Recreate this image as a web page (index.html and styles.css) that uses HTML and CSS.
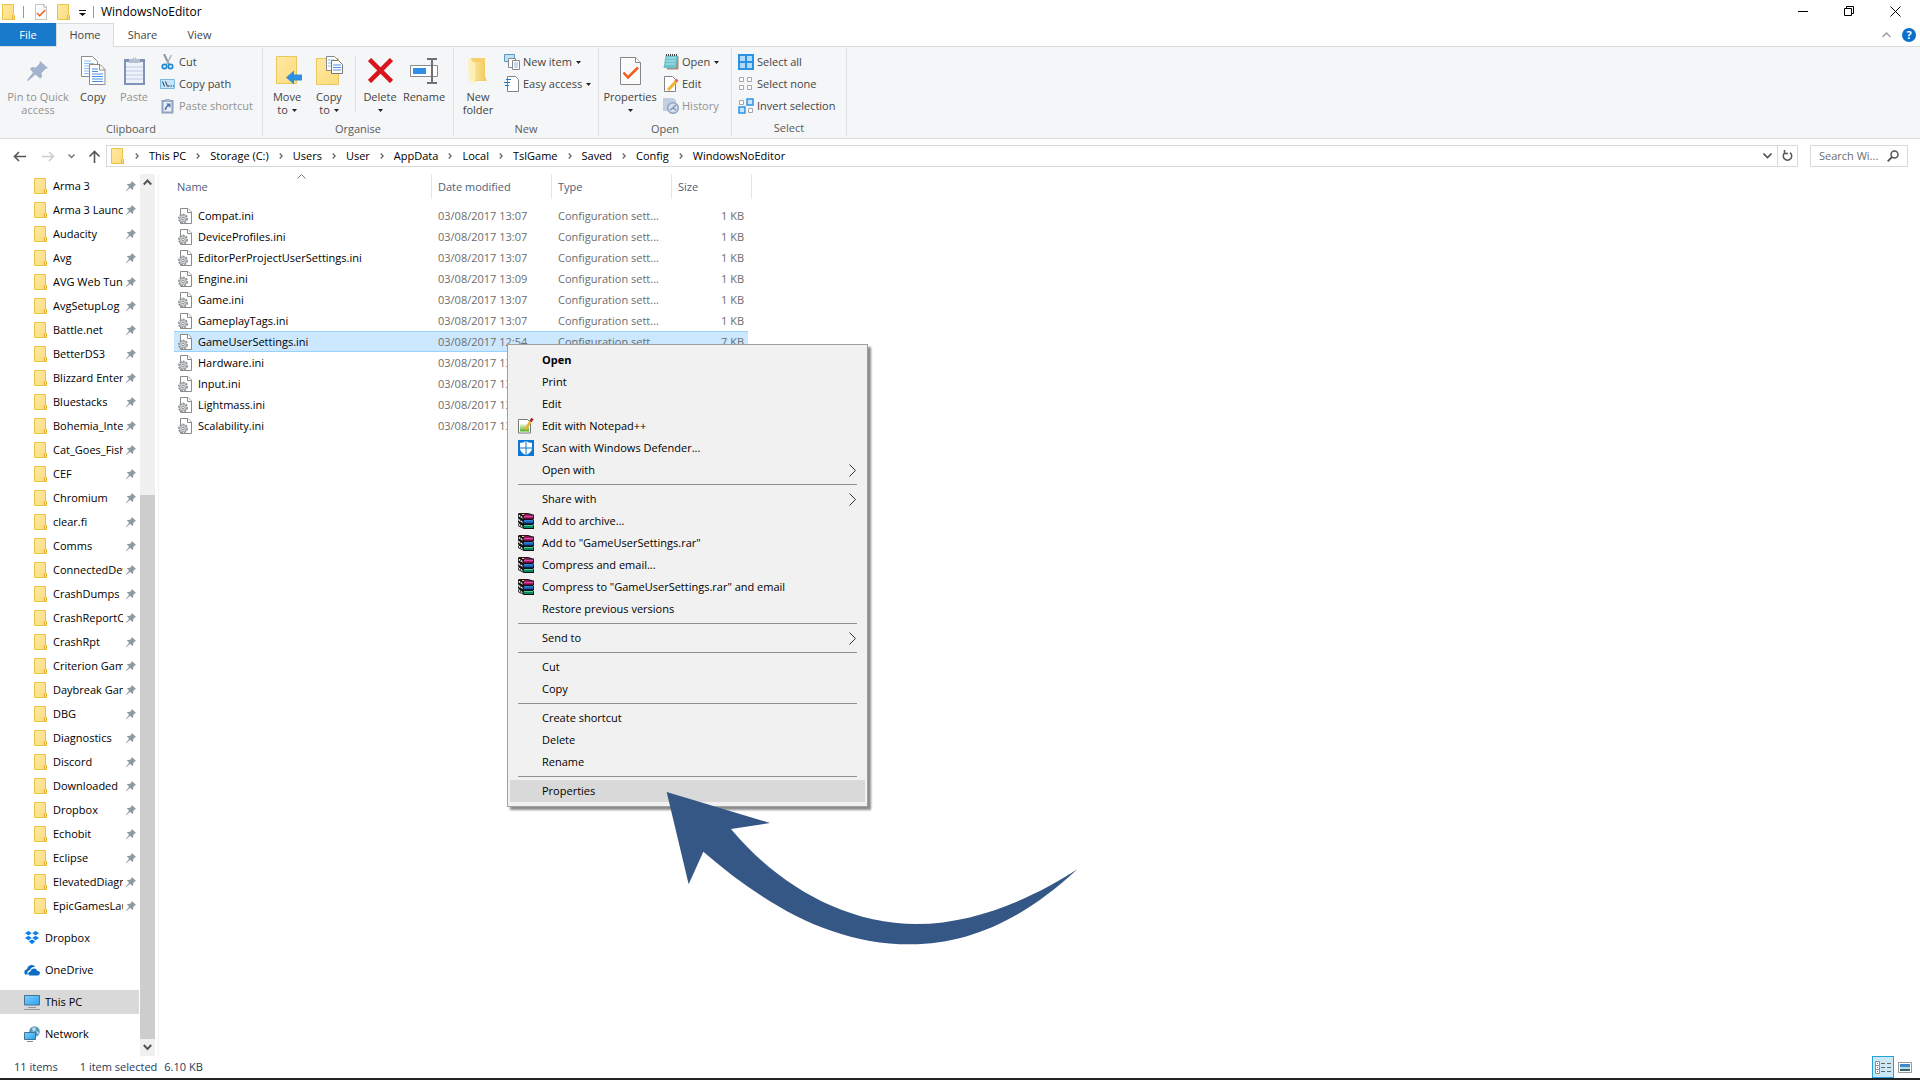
FILE: index.html
```html
<!DOCTYPE html>
<html lang="en-GB">
<head>
<meta charset="utf-8">
<title>WindowsNoEditor</title>
<link rel="stylesheet" href="styles.css">
</head>
<body>
<svg class="defs" aria-hidden="true">
  <defs>
    <linearGradient id="gFolder" x1="0" y1="0" x2="1" y2="1"><stop offset="0" stop-color="#ffe9a2"/><stop offset="1" stop-color="#fbdc7c"/></linearGradient>
    <linearGradient id="gFold" x1="0" y1="0" x2="1" y2="0"><stop offset="0" stop-color="#fbe394"/><stop offset="1" stop-color="#f3cb5c"/></linearGradient>
    <linearGradient id="gScreen" x1="0" y1="0" x2="1" y2="1"><stop offset="0" stop-color="#7fd0fb"/><stop offset="1" stop-color="#2ba2ee"/></linearGradient>
    <linearGradient id="gNpp" x1="0" y1="0" x2="0" y2="1"><stop offset="0" stop-color="#f3f7e4"/><stop offset="1" stop-color="#4fae1c"/></linearGradient>
  </defs>
  <symbol id="folder" viewBox="0 0 14 16"><path d="M.5.5h11v10.200l1 .8v4H.5z" fill="url(#gFolder)" stroke="#e9c447"/><path d="M10.500 15.500v-4l1-1 1 1v4z" fill="#fbe08a" stroke="#e3b93a"/></symbol>
  <symbol id="pin" viewBox="0 0 10 10"><path d="M6 0l4 4-1.300.5-1.600 1.700.1 2.100-.9.700L4.100 6.700.400 9.900 0 9.500l3.200-3.700L1 3.600l.8-.8 2.100.1L5.500 1.300z" fill="#8d989f"/></symbol>
  <symbol id="inifile" viewBox="0 0 14 16"><path d="M2.500.5h7.500l3.500 3.500v11.500h-11z" fill="#fff" stroke="#8a8a8a"/><path d="M9.500.5v4h4" fill="#fff" stroke="#8a8a8a"/><circle cx="5" cy="10.500" r="4" fill="#e4e6e7" stroke="#8f9497" stroke-width="2" stroke-dasharray="2 1"/><circle cx="5" cy="10.500" r="3.100" fill="#dfe2e3" stroke="#a6abae"/><circle cx="5" cy="10.500" r="1.300" fill="#fff" stroke="#858a8d"/></symbol>
  <symbol id="sheets" viewBox="0 0 25 29"><path d="M.5.5h11l5 5v15H.5z" fill="#fff" stroke="#8b8b8b"/><path d="M3 5h7M3 7.500h10M3 10h10M3 12.500h10M3 15h10M3 17.500h10" stroke="#8cbcf0"/><path d="M8.500 8.500h10.500l5 5v15H8.500z" fill="#fff" stroke="#8b8b8b"/><path d="M18.500 8.500v5.500h5.500" fill="none" stroke="#8b8b8b"/><path d="M11 13h6M11 15.500h6M11 18h11M11 20.500h11M11 23h11M11 25.500h11" stroke="#4a90e2"/></symbol>
  <symbol id="props" viewBox="0 0 21 28"><path d="M.5.5h15l5 5v22H.5z" fill="#fbfbfc" stroke="#868686"/><path d="M15.500.5v5h5" fill="#fff" stroke="#868686"/><path d="M3.500 15.500l4.500 5 10-10" fill="none" stroke="#f4591b" stroke-width="2.500"/></symbol>
  <symbol id="chev" viewBox="0 0 4 6"><path d="M.7.5L3.200 3 .7 5.500" fill="none" stroke="#666" stroke-width="1.300"/></symbol>
  <symbol id="down" viewBox="0 0 5 3"><path d="M0 0h5L2.500 3z" fill="#222"/></symbol>
  <symbol id="sub" viewBox="0 0 7 13"><path d="M.5.5l6 6-6 6" fill="none" stroke="#333"/></symbol>
  <symbol id="rar" viewBox="0 0 16 16"><path d="M1 0h9l5 1.500h1V6l-1 .5 1 .5v4l-1 .5 1 .5v4H6L0 13v-2l1-.5L0 9V7l1-.5L0 5V1z" fill="#111"/><path d="M2 .8h7.500L14 2.200H6z" fill="#8e1254"/><path d="M6 2.700h9.200v2.800H6z" fill="#b3146c"/><path d="M6 2.700h9.200v1H6z" fill="#e46bb0"/><path d="M6 7.300h9.200v3H6z" fill="#1258b4"/><path d="M6 7.300h9.200v1H6z" fill="#49a0ec"/><path d="M6 12h9.200v3H6z" fill="#0d8a5a"/><path d="M6 12h9.200v1H6z" fill="#4fd0a0"/><path d="M.8 2.500L5 5M.8 7L5 9.500M.8 11.500L5 14" stroke="#f4f4f4" stroke-width="1.600" stroke-dasharray="1.500 .7"/><path d="M4 1h2v1H4z" fill="#e6d24a"/></symbol>
</svg>

<header class="titlebar">
  <svg class="folder" aria-hidden="true"><use href="#folder"/></svg>
  <span class="tsep"></span>
  <svg class="tprops" aria-hidden="true"><use href="#props"/></svg>
  <svg class="folder" aria-hidden="true"><use href="#folder"/></svg>
  <svg class="tcaret" viewBox="0 0 7 6" aria-hidden="true"><path d="M0 0h7v1H0zM0 3h7L3.500 6z" fill="#111"/></svg>
  <span class="tsep"></span>
  <h1 class="title">WindowsNoEditor</h1>
  <button class="win" aria-label="Minimise"><svg width="11" height="11"><path d="M0 5.500h10" stroke="#000"/></svg></button>
  <button class="win" aria-label="Restore"><svg width="11" height="11"><path d="M.5 2.500h7v7h-7zM2.500 2.500v-2h7v7h-2" fill="none" stroke="#000"/></svg></button>
  <button class="win" aria-label="Close"><svg width="11" height="11"><path d="M.5.5l10 10M10.500.5l-10 10" stroke="#000"/></svg></button>
</header>

<nav class="tabs">
  <button class="tab file">File</button>
  <button class="tab home">Home</button>
  <button class="tab">Share</button>
  <button class="tab">View</button>
  <span class="tools">
    <svg width="9" height="6" aria-hidden="true"><path d="M.5 5l4-4 4 4" fill="none" stroke="#a0a0a0" stroke-width="1.500"/></svg>
    <button class="help" aria-label="Help">?</button>
  </span>
</nav>

<section class="ribbon">
  <div class="group clipboard">
    <div class="tools-row">
      <button class="big w76 off"><svg width="22" height="22" viewBox="0 0 22 22"><path d="M13 1l8 7-2.500 1-4 4 .5 4-2 1.500-4.500-4L1.500 20.500 0 21l.5-1.500L6 12.500 3 9l2-2 4 .5 3.500-4z" fill="#a3b3cd"/></svg><span>Pin to Quick<br>access</span></button>
      <button class="big w36"><svg width="25" height="29"><use href="#sheets"/></svg><span>Copy</span></button>
      <button class="big w46 off"><svg width="21" height="29" viewBox="0 0 21 29"><path d="M0 3h21v26H0z" fill="#8092b5"/><path d="M2 6h17v21H2z" fill="#eef2fa"/><path d="M2 11h17M2 15h17M2 19h17M2 23h17" stroke="#bfcce4"/><path d="M5 3h3.500a2 2 0 014 0H16v4H5z" fill="#b5bfd0"/><path d="M10 1h1v2h-1z" fill="#fff"/></svg><span>Paste</span></button>
      <div class="small-col">
        <button class="small"><svg width="16" height="16" viewBox="0 0 16 16"><path d="M4 0l5 10.500" stroke="#8799a8" stroke-width="2"/><path d="M11.500 1L6.500 10.500" stroke="#a9b6c0" stroke-width="1.500"/><circle cx="4.500" cy="12.500" r="2.200" fill="none" stroke="#1e88d2" stroke-width="1.700"/><circle cx="10.500" cy="12.500" r="2.200" fill="none" stroke="#1e88d2" stroke-width="1.700"/></svg>Cut</button>
        <button class="small"><svg width="16" height="16" viewBox="0 0 16 16"><path d="M.5 3.500h14v9H.5z" fill="#c5e6fb" stroke="#7db9df"/><path d="M2.500 5.500l2 5M5.500 5.500l2 5M8 10h1.500M10.500 10H12M13 10h1" stroke="#234"/></svg>Copy path</button>
        <button class="small off"><svg width="16" height="16" viewBox="0 0 16 16"><path d="M1.500 2h12v13.500h-12z" fill="#8fa0c0"/><path d="M3.500 4h8v9.500h-8z" fill="#eaf0fa"/><path d="M5 1h5v3H5z" fill="#a6b2c8"/><path d="M5.500 12c0-3 1-4 4-5" fill="none" stroke="#5575ad" stroke-width="1.700"/><path d="M6 5.500h4.500V10z" fill="#5575ad"/></svg>Paste shortcut</button>
      </div>
    </div>
    <h2 class="glabel">Clipboard</h2>
  </div>

  <div class="group organise">
    <div class="tools-row">
      <button class="big w42"><svg width="29" height="29" viewBox="0 0 29 29"><path d="M3.500.5h20v27h-20z" fill="url(#gFolder)" stroke="#eac75d"/><path d="M13 21.500l8-7v4h8v6h-8v4z" fill="#2f8fe0"/></svg><span>Move<br>to<svg class="dn"><use href="#down"/></svg></span></button>
      <button class="big w42"><svg width="27" height="31" viewBox="0 0 27 31"><path d="M.5 3.500h22v26H.5z" fill="url(#gFolder)" stroke="#eac75d"/><path d="M10.500 1.500h8l4 4v10h-12z" fill="#fff" stroke="#888"/><path d="M12 5h6M12 8h5M12 11h5" stroke="#8cbcf0"/><path d="M15.500 5.500h7l4 4v9h-11z" fill="#fff" stroke="#777"/><path d="M17 10h8M17 12.500h8M17 15h8" stroke="#4a90e2"/></svg><span>Copy<br>to<svg class="dn"><use href="#down"/></svg></span></button>
      <span class="vsep"></span>
      <button class="big w46"><svg width="25" height="25" viewBox="0 0 25 25"><path d="M1.500 1.500l22 22M23.500 1.500l-22 22" stroke="#d8141c" stroke-width="4.500"/></svg><span>Delete<br><svg class="dn alone"><use href="#down"/></svg></span></button>
      <button class="big w42"><svg width="28" height="26" viewBox="0 0 28 26"><path d="M.5 7.500h27v11H.5z" fill="#fff" stroke="#8a8a8a"/><path d="M3 10h13v6H3z" fill="#2d8fe5"/><path d="M17 1h4q1 0 1 2v20q0 2-1 2h-4M27 1h-4q-1 0-1 2M27 25h-4q-1 0-1-2" fill="none" stroke="#6f6f6f" stroke-width="2"/></svg><span>Rename</span></button>
    </div>
    <h2 class="glabel">Organise</h2>
  </div>

  <div class="group new">
    <div class="tools-row">
      <button class="big w42"><svg width="20" height="28" viewBox="0 0 20 28"><path d="M3 1h14v18l2 5H6z" fill="#f6d16b"/><path d="M0 1l7 5v21l-6-4z" fill="#fff0b8"/><path d="M7 5h10v18H7z" fill="url(#gFold)"/></svg><span>New<br>folder</span></button>
      <div class="small-col">
        <button class="small"><svg width="16" height="16" viewBox="0 0 16 16"><path d="M.5.5h10v7H.5z" fill="#bfe2f8" stroke="#5b98bd"/><path d="M4.500 4.500h7v9h-7z" fill="#fff" stroke="#888"/><path d="M8.500 6.500h7v9h-7z" fill="#fff" stroke="#888"/><path d="M10 9h4M10 11h4M10 13h4" stroke="#8cb8e4"/></svg>New item<svg class="dn"><use href="#down"/></svg></button>
        <button class="small"><svg width="16" height="16" viewBox="0 0 16 16"><path d="M3.500.5h8l3 3v12h-11z" fill="#fff" stroke="#848484"/><path d="M2 3.500h5M0 6.500h6M1 9.500h4" stroke="#2372b8"/></svg>Easy access<svg class="dn"><use href="#down"/></svg></button>
      </div>
    </div>
    <h2 class="glabel">New</h2>
  </div>

  <div class="group open">
    <div class="tools-row">
      <button class="big w56"><svg width="21" height="28"><use href="#props"/></svg><span>Properties<br><svg class="dn alone"><use href="#down"/></svg></span></button>
      <div class="small-col">
        <button class="small"><svg width="16" height="16" viewBox="0 0 16 16"><path d="M3 2h12.500v13.500H4z" fill="#a3907a"/><path d="M2.500 1.500h12l-1.500 12.500H.5z" fill="#6cc3d0"/><path d="M3.500 4h9.500M3 7h9.500M2.500 10h9.500" stroke="#b8e8ee"/><path d="M3 1h11" stroke="#444" stroke-dasharray="1 1" stroke-width="2"/></svg>Open<svg class="dn"><use href="#down"/></svg></button>
        <button class="small"><svg width="16" height="16" viewBox="0 0 16 16"><path d="M1.500.5h8l3 3v12h-11z" fill="#fff" stroke="#848484"/><path d="M5 14l8.500-9" stroke="#f2b42c" stroke-width="3"/><path d="M12.500 5.500l2-2" stroke="#e06a6a" stroke-width="3"/></svg>Edit</button>
        <button class="small off"><svg width="16" height="16" viewBox="0 0 16 16"><path d="M0 0h10l3 2v11H0z" fill="#c3cee3"/><circle cx="10" cy="10" r="5.300" fill="#d7deec" stroke="#93a4c4" stroke-width="1.500"/><path d="M7 12l3-2 3-3M10 10l3 2" stroke="#7f93b8" stroke-width="1.500"/></svg>History</button>
      </div>
    </div>
    <h2 class="glabel">Open</h2>
  </div>

  <div class="group select">
    <div class="tools-row">
      <div class="small-col">
        <button class="small"><svg width="16" height="16" viewBox="0 0 16 16"><path d="M1 1h14v14H1zM8 1v14M1 8h14" fill="#b4dcfa" stroke="#2b93e6" stroke-width="2"/></svg>Select all</button>
        <button class="small"><svg width="16" height="16" viewBox="0 0 16 16"><path d="M1.500 1.500h4v4h-4zM9.500 1.500h4v4h-4zM1.500 9.500h4v4h-4zM9.500 9.500h4v4h-4z" fill="#fff" stroke="#a6a6a6"/></svg>Select none</button>
        <button class="small"><svg width="16" height="16" viewBox="0 0 16 16"><path d="M1.500 2.500h4v4h-4zM10.500 10.500h4v4h-4z" fill="#fff" stroke="#a6a6a6"/><path d="M9 1h6v6H9zM1 9h6v6H1z" fill="#c5e5fc" stroke="#2b93e6" stroke-width="1.500"/></svg>Invert selection</button>
      </div>
    </div>
    <h2 class="glabel">Select</h2>
  </div>
</section>

<div class="navbar">
  <div class="arrows">
    <button class="bare back" aria-label="Back"><svg width="13" height="11"><path d="M13 5.500H2M6 1L1.500 5.500 6 10" fill="none" stroke="#555" stroke-width="1.600"/></svg></button>
    <button class="bare" aria-label="Forward"><svg width="13" height="11"><path d="M0 5.500h11M7 1l4.500 4.500L7 10" fill="none" stroke="#ccc" stroke-width="1.600"/></svg></button>
    <button class="bare" aria-label="Recent"><svg width="7" height="5"><path d="M.5.5l3 3 3-3" fill="none" stroke="#777" stroke-width="1.500"/></svg></button>
    <button class="bare" aria-label="Up"><svg width="13" height="13"><path d="M6.500 13V2M1.500 6.500l5-5 5 5" fill="none" stroke="#555" stroke-width="1.600"/></svg></button>
  </div>
  <div class="address">
    <svg class="folder" aria-hidden="true"><use href="#folder"/></svg>
    <svg class="chev"><use href="#chev"/></svg><a href="#">This PC</a>
    <svg class="chev"><use href="#chev"/></svg><a href="#">Storage (C:)</a>
    <svg class="chev"><use href="#chev"/></svg><a href="#">Users</a>
    <svg class="chev"><use href="#chev"/></svg><a href="#">User</a>
    <svg class="chev"><use href="#chev"/></svg><a href="#">AppData</a>
    <svg class="chev"><use href="#chev"/></svg><a href="#">Local</a>
    <svg class="chev"><use href="#chev"/></svg><a href="#">TslGame</a>
    <svg class="chev"><use href="#chev"/></svg><a href="#">Saved</a>
    <svg class="chev"><use href="#chev"/></svg><a href="#">Config</a>
    <svg class="chev"><use href="#chev"/></svg><a href="#">WindowsNoEditor</a>
    <button class="bare drop" aria-label="Previous locations"><svg width="9" height="6"><path d="M.5.5l4 4 4-4" fill="none" stroke="#555" stroke-width="1.600"/></svg></button>
    <button class="bare refresh" aria-label="Refresh"><svg width="11" height="12"><path d="M8 2.600a4.200 4.200 0 11-5 0M2.500 0v3.500H6" fill="none" stroke="#555" stroke-width="1.500"/></svg></button>
  </div>
  <label class="search"><input type="text" placeholder="Search Wi..." aria-label="Search WindowsNoEditor"><svg width="12" height="12"><circle cx="7.500" cy="4.500" r="3.500" fill="none" stroke="#555" stroke-width="1.500"/><path d="M5 7L.7 11.300" stroke="#555" stroke-width="1.800"/></svg></label>
</div>

<main class="body">
  <aside class="side">
    <ul class="quick">
      <li><svg class="folder"><use href="#folder"/></svg><a href="#">Arma 3</a><svg class="pin"><use href="#pin"/></svg></li>
      <li><svg class="folder"><use href="#folder"/></svg><a href="#">Arma 3 Launcher</a><svg class="pin"><use href="#pin"/></svg></li>
      <li><svg class="folder"><use href="#folder"/></svg><a href="#">Audacity</a><svg class="pin"><use href="#pin"/></svg></li>
      <li><svg class="folder"><use href="#folder"/></svg><a href="#">Avg</a><svg class="pin"><use href="#pin"/></svg></li>
      <li><svg class="folder"><use href="#folder"/></svg><a href="#">AVG Web TuneUp</a><svg class="pin"><use href="#pin"/></svg></li>
      <li><svg class="folder"><use href="#folder"/></svg><a href="#">AvgSetupLog</a><svg class="pin"><use href="#pin"/></svg></li>
      <li><svg class="folder"><use href="#folder"/></svg><a href="#">Battle.net</a><svg class="pin"><use href="#pin"/></svg></li>
      <li><svg class="folder"><use href="#folder"/></svg><a href="#">BetterDS3</a><svg class="pin"><use href="#pin"/></svg></li>
      <li><svg class="folder"><use href="#folder"/></svg><a href="#">Blizzard Entertainment</a><svg class="pin"><use href="#pin"/></svg></li>
      <li><svg class="folder"><use href="#folder"/></svg><a href="#">Bluestacks</a><svg class="pin"><use href="#pin"/></svg></li>
      <li><svg class="folder"><use href="#folder"/></svg><a href="#">Bohemia_Interactive</a><svg class="pin"><use href="#pin"/></svg></li>
      <li><svg class="folder"><use href="#folder"/></svg><a href="#">Cat_Goes_Fishing</a><svg class="pin"><use href="#pin"/></svg></li>
      <li><svg class="folder"><use href="#folder"/></svg><a href="#">CEF</a><svg class="pin"><use href="#pin"/></svg></li>
      <li><svg class="folder"><use href="#folder"/></svg><a href="#">Chromium</a><svg class="pin"><use href="#pin"/></svg></li>
      <li><svg class="folder"><use href="#folder"/></svg><a href="#">clear.fi</a><svg class="pin"><use href="#pin"/></svg></li>
      <li><svg class="folder"><use href="#folder"/></svg><a href="#">Comms</a><svg class="pin"><use href="#pin"/></svg></li>
      <li><svg class="folder"><use href="#folder"/></svg><a href="#">ConnectedDevices</a><svg class="pin"><use href="#pin"/></svg></li>
      <li><svg class="folder"><use href="#folder"/></svg><a href="#">CrashDumps</a><svg class="pin"><use href="#pin"/></svg></li>
      <li><svg class="folder"><use href="#folder"/></svg><a href="#">CrashReportClient</a><svg class="pin"><use href="#pin"/></svg></li>
      <li><svg class="folder"><use href="#folder"/></svg><a href="#">CrashRpt</a><svg class="pin"><use href="#pin"/></svg></li>
      <li><svg class="folder"><use href="#folder"/></svg><a href="#">Criterion Games</a><svg class="pin"><use href="#pin"/></svg></li>
      <li><svg class="folder"><use href="#folder"/></svg><a href="#">Daybreak Games</a><svg class="pin"><use href="#pin"/></svg></li>
      <li><svg class="folder"><use href="#folder"/></svg><a href="#">DBG</a><svg class="pin"><use href="#pin"/></svg></li>
      <li><svg class="folder"><use href="#folder"/></svg><a href="#">Diagnostics</a><svg class="pin"><use href="#pin"/></svg></li>
      <li><svg class="folder"><use href="#folder"/></svg><a href="#">Discord</a><svg class="pin"><use href="#pin"/></svg></li>
      <li><svg class="folder"><use href="#folder"/></svg><a href="#">Downloaded</a><svg class="pin"><use href="#pin"/></svg></li>
      <li><svg class="folder"><use href="#folder"/></svg><a href="#">Dropbox</a><svg class="pin"><use href="#pin"/></svg></li>
      <li><svg class="folder"><use href="#folder"/></svg><a href="#">Echobit</a><svg class="pin"><use href="#pin"/></svg></li>
      <li><svg class="folder"><use href="#folder"/></svg><a href="#">Eclipse</a><svg class="pin"><use href="#pin"/></svg></li>
      <li><svg class="folder"><use href="#folder"/></svg><a href="#">ElevatedDiagnostics</a><svg class="pin"><use href="#pin"/></svg></li>
      <li><svg class="folder"><use href="#folder"/></svg><a href="#">EpicGamesLauncher</a><svg class="pin"><use href="#pin"/></svg></li>
    </ul>
    <ul class="roots">
      <li><svg width="16" height="16" viewBox="0 0 16 16"><path d="M4.500.8L8 3.200 4.500 5.600.6 3.200zM11.500.8l3.900 2.400-3.900 2.400L8 3.200zM4.500 5.600L8 8l-3.500 2.400L.6 8zM11.500 5.600L15.400 8l-3.900 2.400L8 8zM4.500 11.300L8 9.200l3.500 2.100L8 14.500z" fill="#0a7ee8" stroke="#fff" stroke-width=".4"/></svg><a href="#">Dropbox</a></li>
      <li><svg width="16" height="16" viewBox="0 0 16 16"><path d="M1 12.500C-1 9 2 7 3 7.300 4 2 10 2 11.500 5 8 4 6.500 7 6 8 3 8.500 3 11 4 12.500z" fill="#0b6cc4"/><path d="M5.500 13.500c-2-1-1.500-4 1-4 .5-4 6-4 6.500-.8 4 0 3.500 4.500 1 4.800z" fill="#0b6cc4"/></svg><a href="#">OneDrive</a></li>
      <li class="current"><svg width="16" height="16" viewBox="0 0 16 16"><path d="M.5 1.500h15v9.500H.5z" fill="url(#gScreen)" stroke="#42738f"/><path d="M4 13.500h8M0 15.500h16" stroke="#8a9aa6"/></svg><a href="#">This PC</a></li>
      <li><svg width="16" height="16" viewBox="0 0 16 16"><circle cx="10.500" cy="5.500" r="5.300" fill="#5797b8"/><path d="M8 2l3-1 1 3-3 2zM12 5l3 1-1 3z" fill="#b8d9e6"/><path d="M.5 6.500h11v7H.5z" fill="url(#gScreen)" stroke="#42738f"/><path d="M3 15.500h6" stroke="#7b8b96"/></svg><a href="#">Network</a></li>
    </ul>
  </aside>
  <div class="scroll">
    <button class="bare" aria-label="Scroll up"><svg width="9" height="7"><path d="M.8 5.500l3.700-4 3.700 4" fill="none" stroke="#555" stroke-width="2"/></svg></button>
    <span class="thumb"></span>
    <button class="bare" aria-label="Scroll down"><svg width="9" height="7"><path d="M.8 1l3.700 4 3.700-4" fill="none" stroke="#555" stroke-width="2"/></svg></button>
  </div>

  <section class="files">
    <table>
      <thead><tr><th class="cname">Name<svg class="sort" width="9" height="5"><path d="M.5 4.500l4-4 4 4" fill="none" stroke="#777"/></svg></th><th class="cdate">Date modified</th><th class="ctype">Type</th><th class="csize">Size</th></tr></thead>
      <tbody>
        <tr><td><span class="fname"><svg class="ini"><use href="#inifile"/></svg>Compat.ini</span></td><td>03/08/2017 13:07</td><td>Configuration sett...</td><td>1 KB</td></tr>
        <tr><td><span class="fname"><svg class="ini"><use href="#inifile"/></svg>DeviceProfiles.ini</span></td><td>03/08/2017 13:07</td><td>Configuration sett...</td><td>1 KB</td></tr>
        <tr><td><span class="fname"><svg class="ini"><use href="#inifile"/></svg>EditorPerProjectUserSettings.ini</span></td><td>03/08/2017 13:07</td><td>Configuration sett...</td><td>1 KB</td></tr>
        <tr><td><span class="fname"><svg class="ini"><use href="#inifile"/></svg>Engine.ini</span></td><td>03/08/2017 13:09</td><td>Configuration sett...</td><td>1 KB</td></tr>
        <tr><td><span class="fname"><svg class="ini"><use href="#inifile"/></svg>Game.ini</span></td><td>03/08/2017 13:07</td><td>Configuration sett...</td><td>1 KB</td></tr>
        <tr><td><span class="fname"><svg class="ini"><use href="#inifile"/></svg>GameplayTags.ini</span></td><td>03/08/2017 13:07</td><td>Configuration sett...</td><td>1 KB</td></tr>
        <tr class="selected"><td><span class="fname"><svg class="ini"><use href="#inifile"/></svg>GameUserSettings.ini</span></td><td>03/08/2017 12:54</td><td>Configuration sett...</td><td>7 KB</td></tr>
        <tr><td><span class="fname"><svg class="ini"><use href="#inifile"/></svg>Hardware.ini</span></td><td>03/08/2017 13:07</td><td></td><td></td></tr>
        <tr><td><span class="fname"><svg class="ini"><use href="#inifile"/></svg>Input.ini</span></td><td>03/08/2017 13:07</td><td></td><td></td></tr>
        <tr><td><span class="fname"><svg class="ini"><use href="#inifile"/></svg>Lightmass.ini</span></td><td>03/08/2017 13:07</td><td></td><td></td></tr>
        <tr><td><span class="fname"><svg class="ini"><use href="#inifile"/></svg>Scalability.ini</span></td><td>03/08/2017 13:07</td><td></td><td></td></tr>
      </tbody>
    </table>

    <div class="menu" role="menu">
      <button class="item default" role="menuitem"><span class="mi"></span>Open</button>
      <button class="item" role="menuitem"><span class="mi"></span>Print</button>
      <button class="item" role="menuitem"><span class="mi"></span>Edit</button>
      <button class="item" role="menuitem"><span class="mi"><svg width="16" height="16" viewBox="0 0 16 16"><path d="M.5 1.500h9l3 3v10.500H.5z" fill="#fff" stroke="#777"/><path d="M2 6h9v7.500H2z" fill="url(#gNpp)"/><path d="M7.500 11.500l5-8" stroke="#efb02c" stroke-width="2.500"/><path d="M12.500 3.500l2-3" stroke="#a02020" stroke-width="2.500"/></svg></span>Edit with Notepad++</button>
      <button class="item" role="menuitem"><span class="mi"><svg width="16" height="16" viewBox="0 0 16 16"><path d="M0 0h16v16H0z" fill="#0a78d7"/><path d="M8 1c2 1.300 4 1.800 6 1.800V8c0 3.500-3 5.800-6 7-3-1.200-6-3.500-6-7V2.800C4 2.800 6 2.300 8 1z" fill="#fff"/><path d="M8 1v14M2 8h12" stroke="#0a78d7"/></svg></span>Scan with Windows Defender...</button>
      <button class="item" role="menuitem"><span class="mi"></span>Open with<svg class="sub"><use href="#sub"/></svg></button>
      <hr>
      <button class="item" role="menuitem"><span class="mi"></span>Share with<svg class="sub"><use href="#sub"/></svg></button>
      <button class="item" role="menuitem"><span class="mi"><svg width="16" height="16"><use href="#rar"/></svg></span>Add to archive...</button>
      <button class="item" role="menuitem"><span class="mi"><svg width="16" height="16"><use href="#rar"/></svg></span>Add to "GameUserSettings.rar"</button>
      <button class="item" role="menuitem"><span class="mi"><svg width="16" height="16"><use href="#rar"/></svg></span>Compress and email...</button>
      <button class="item" role="menuitem"><span class="mi"><svg width="16" height="16"><use href="#rar"/></svg></span>Compress to "GameUserSettings.rar" and email</button>
      <button class="item" role="menuitem"><span class="mi"></span>Restore previous versions</button>
      <hr>
      <button class="item" role="menuitem"><span class="mi"></span>Send to<svg class="sub"><use href="#sub"/></svg></button>
      <hr>
      <button class="item" role="menuitem"><span class="mi"></span>Cut</button>
      <button class="item" role="menuitem"><span class="mi"></span>Copy</button>
      <hr>
      <button class="item" role="menuitem"><span class="mi"></span>Create shortcut</button>
      <button class="item" role="menuitem"><span class="mi"></span>Delete</button>
      <button class="item" role="menuitem"><span class="mi"></span>Rename</button>
      <hr>
      <button class="item hot" role="menuitem"><span class="mi"></span>Properties</button>
    </div>
    <svg class="pointer" viewBox="0 0 1380 570" aria-hidden="true"><path d="M80 66L390 159 273 177C400 330 600 462 830 462 1010 462 1190 378 1312 298 1160 438 1000 523 810 523 570 523 370 400 190 245L146 343z" fill="#345785"/></svg>
  </section>
</main>

<footer class="status">
  <span>11 items</span>
  <span>1 item selected</span>
  <span>6.10 KB</span>
  <button class="view on" aria-label="Details"><svg width="16" height="13" viewBox="0 0 16 13"><path d="M.5.5h4v12h-4zM.5 4.500h4M.5 8.500h4" fill="#fff" stroke="#8f8f8f"/><path d="M6 2.500h4M6 6.500h4M6 10.500h4M12 2.500h4M12 6.500h4M12 10.500h4" stroke="#666"/><path d="M2 2h1v1H2zM2 6h1v1H2z" fill="#3b8fd0"/><path d="M2 10h1v1H2z" fill="#d33"/></svg></button>
  <button class="view" aria-label="Large icons"><svg width="14" height="11" viewBox="0 0 14 11"><path d="M.5.5h13v10H.5z" fill="#fff" stroke="#999"/><path d="M2 2h10v3.500H2z" fill="#3f88c9"/><path d="M2 5h10v2H2z" fill="#bcd9ea"/><path d="M2 7h10v2H2z" fill="#34686a"/></svg></button>
</footer>
<div class="taskbar"></div>
</body>
</html>
```
FILE: styles.css
```css
* { box-sizing: border-box; }
body {
  margin: 0;
  min-height: 100vh;
  display: flex;
  flex-direction: column;
  background: #fff;
  color: #000;
  font: 11px/16px "Open Sans", "Noto Sans", sans-serif;
  overflow-x: hidden;
}
button, input { font: inherit; color: inherit; background: none; border: 0; padding: 0; margin: 0; }
a { color: inherit; text-decoration: none; }
ul { list-style: none; margin: 0; padding: 0; }
h1, h2 { margin: 0; font-size: 11px; font-weight: 400; }
svg { flex: none; }
.defs { position: absolute; width: 0; height: 0; }
.folder { width: 14px; height: 16px; }
.bare { display: flex; align-items: center; justify-content: center; }

.titlebar { display: flex; align-items: center; height: 23px; padding: 0 2px; }
.tsep { width: 1px; height: 12px; margin: 0 7px; background: #999; }
.tprops { width: 12px; height: 16px; margin: 0 10px 0 4px; }
.tcaret { width: 7px; height: 6px; margin: 2px 0 0 8px; }
.title { flex: 1; font-size: 12px; }
.win { width: 46px; height: 23px; display: flex; justify-content: center; align-items: center; }

.tabs { display: flex; height: 24px; border-bottom: 1px solid #dadbdc; }
.tab { width: 57px; height: 23px; color: #444; text-align: center; }
.tab.file { width: 56px; background: #1979ca; color: #fff; }
.tab.home { width: 58px; height: 24px; padding-bottom: 1px; border: 1px solid #dadbdc; border-bottom: 0; background: #f5f6f7; }
.tools { margin-left: auto; display: flex; align-items: center; gap: 11px; padding-right: 4px; }
.help { width: 14px; height: 14px; border-radius: 7px; background: #0c6fcb; color: #fff; font-weight: 700; line-height: 14px; }

.ribbon { display: flex; height: 92px; padding-top: 1px; background: #f5f6f7; border-bottom: 1px solid #dadbdc; color: #444; }
.group { display: flex; flex-direction: column; height: 88px; border-right: 1px solid #dfe0e2; padding-top: 3px; }
.tools-row { display: flex; height: 71px; padding-left: 3px; }
.clipboard { width: 263px; }
.clipboard .tools-row { padding-left: 1px; }
.organise { width: 191px; }
.new { width: 145px; }
.open { width: 133px; }
.select { width: 115px; }
.glabel { text-align: center; color: #5a5a5a; line-height: 16px; }
.big { display: flex; flex-direction: column; align-items: center; height: 70px; line-height: 13px; white-space: nowrap; }
.big > svg { margin: auto 0; }
.big > span { height: 31px; text-align: center; }
.w36 { width: 36px; }
.w42 { width: 42px; }
.w46 { width: 46px; }
.w56 { width: 56px; }
.w76 { width: 74px; }
.off { color: #929292; }
.dn { width: 5px; height: 3px; margin-left: 4px; vertical-align: 2px; }
.dn.alone { margin-left: 0; }
.small .dn { margin-left: 1px; }
.vsep { width: 1px; height: 56px; margin: 5px 1px 0 5px; background: #dfe0e2; }
.small-col { display: flex; flex-direction: column; padding-left: 3px; }
.new .small-col, .open .small-col { padding-left: 5px; }
.small { display: flex; align-items: center; gap: 3px; height: 22px; white-space: nowrap; }

.navbar { display: flex; align-items: center; height: 35px; padding: 0 12px 1px 13px; gap: 12px; }
.arrows { display: flex; align-items: center; gap: 13px; margin-right: -7px; }
.back { margin-right: 3px; }
.address { flex: 1; display: flex; align-items: center; height: 22px; border: 1px solid #d9d9d9; padding-left: 4px; white-space: nowrap; }
.chev { width: 4px; height: 6px; margin: 0 10px; }
.drop { width: 20px; height: 20px; margin-left: auto; }
.refresh { width: 20px; height: 20px; border-left: 1px solid #d9d9d9; }
.search { display: flex; align-items: center; width: 98px; height: 22px; padding: 0 8px; border: 1px solid #d9d9d9; }
.search input { flex: 1; min-width: 0; outline: 0; }
.search input::placeholder { color: #6d6d6d; opacity: 1; }

.body { flex: 1; display: flex; }
.side { width: 140px; padding-right: 1px; }
.quick li { display: flex; align-items: center; height: 24px; padding-left: 34px; }
.quick a { width: 70px; margin-left: 5px; overflow: hidden; white-space: nowrap; }
.pin { width: 10px; height: 10px; margin-left: 3px; }
.roots li { display: flex; align-items: center; gap: 5px; height: 24px; margin-top: 8px; padding-left: 24px; }
.roots .current { background: #d9d9d9; }
.scroll { display: flex; flex-direction: column; width: 15px; background: #f0f0f0; }
.scroll .bare { width: 15px; height: 17px; }
.thumb { height: 544px; margin-top: auto; background: #cdcdcd; }

.files { position: relative; flex: 1; margin-left: 3px; padding-left: 15px; border-left: 1px solid #f3f3f3; }
table { border-collapse: separate; border-spacing: 0; table-layout: fixed; width: 578px; }
th { position: relative; height: 25px; padding: 0 0 0 6px; border-right: 1px solid #e5e5e5; color: #4c607a; font-weight: 400; text-align: left; }
th:first-child { padding-left: 3px; }
.sort { position: absolute; left: 123px; top: 0; }
.cname { width: 258px; }
.cdate, .ctype { width: 120px; }
.csize { width: 80px; }
thead::after { content: ""; display: block; height: 6px; }
td { height: 21px; padding: 0 0 0 6px; color: #6d6d6d; white-space: nowrap; }
td:first-child { padding-left: 4px; color: #000; }
td:last-child { text-align: right; padding-right: 4px; border-right: 4px solid #fff; }
.fname { display: flex; align-items: center; gap: 6px; }
.ini { width: 14px; height: 16px; }
.selected td { background: #cce8ff; box-shadow: inset 0 1px #99d1ff, inset 0 -1px #99d1ff; }

.menu { position: absolute; left: 348px; top: 170px; width: 361px; padding: 4px 2px; border: 1px solid #a0a0a0; background: #f1f1f1; box-shadow: 3px 3px 2px rgba(0, 0, 0, .45); }
.item { display: flex; align-items: center; width: 100%; height: 22px; padding: 0 9px 0 8px; white-space: nowrap; }
.mi { width: 16px; height: 16px; margin-right: 8px; }
.mi svg { display: block; }
.default { font-weight: 700; }
.hot { background: #d9d9d9; }
.sub { width: 7px; height: 13px; margin-left: auto; }
.menu hr { height: 1px; margin: 3px 8px; border: 0; background: #919191; }
.pointer { position: absolute; left: 481px; top: 596px; width: 460px; height: 190px; }

.status { display: flex; align-items: center; height: 22px; padding: 0 4px 0 14px; color: #1e395b; }
.status span { margin-right: 22px; }
.status span + span { margin-right: 7px; }
.view { display: flex; align-items: center; justify-content: center; width: 22px; height: 22px; }
.view.on { margin-left: auto; border: 1px solid #26a0da; background: #cbe8f6; }
.taskbar { height: 2px; background: #222326; }
```
